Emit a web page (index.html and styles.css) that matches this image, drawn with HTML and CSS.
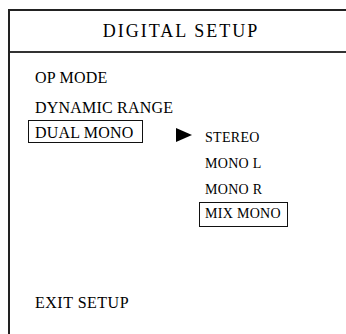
FILE: index.html
```html
<!DOCTYPE html>
<html>
<head>
<meta charset="utf-8">
<link rel="stylesheet" href="styles.css">
</head>
<body>
<div class="frame">
  <div class="header">DIGITAL SETUP</div>
  <div class="content">
    <div class="menu">
      <div class="item">OP MODE</div>
      <div class="item">DYNAMIC RANGE</div>
      <div class="item boxed">DUAL MONO</div>
    </div>
    <div class="submenu">
      <svg class="arrow" width="16" height="14" viewBox="0 0 16 14"><polygon points="0,0 16,7 0,14" fill="#000"/></svg>
      <div class="options">
        <div class="opt">STEREO</div>
        <div class="opt">MONO L</div>
        <div class="opt">MONO R</div>
        <div class="opt boxed-opt">MIX MONO</div>
      </div>
    </div>
  </div>
  <div class="exit">EXIT SETUP</div>
</div>
</body>
</html>
```
FILE: styles.css
```css
html, body {
  margin: 0;
  padding: 0;
  background: #fff;
  overflow: hidden;
  width: 346px;
  height: 334px;
}
body {
  font-family: "Liberation Serif", "Times New Roman", serif;
  color: #000;
}
.frame {
  margin: 9px 0 0 8px;
  width: 344px;
  height: 340px;
  box-sizing: border-box;
  border: 2px solid #222;
  border-bottom: none;
  display: flex;
  flex-direction: column;
}
.header {
  height: 40px;
  line-height: 40px;
  text-align: center;
  font-size: 18px;
  letter-spacing: 2px;
  border-bottom: 2px solid #333;
  padding-left: 2px;
}
.content {
  height: 235px;
  box-sizing: border-box;
  padding: 10px 0 0 18px;
  display: flex;
  align-items: flex-start;
}
.menu {
  display: flex;
  flex-direction: column;
  align-items: flex-start;
  font-size: 16px;
  width: 148px;
}
.item {
  line-height: 30px;
  padding-left: 7px;
  letter-spacing: 0.2px;
}
.boxed {
  margin-top: -3px;
  line-height: 19px;
  border: 1px solid #111;
  padding: 2px 8px 0 6px;
}
.submenu {
  margin-top: 62px;
  display: flex;
  align-items: flex-start;
}
.arrow {
  margin-top: 3px;
  display: block;
}
.options {
  margin-left: 7px;
  display: flex;
  flex-direction: column;
  align-items: flex-start;
  font-size: 14px;
}
.opt {
  line-height: 26px;
  padding-left: 6px;
  letter-spacing: 0.3px;
}
.boxed-opt {
  margin-top: -1px;
  line-height: 21px;
  border: 1px solid #111;
  padding: 0 6px 2px 5px;
}
.exit {
  padding-left: 25px;
  line-height: 30px;
  font-size: 16px;
  letter-spacing: 0.5px;
}
```
